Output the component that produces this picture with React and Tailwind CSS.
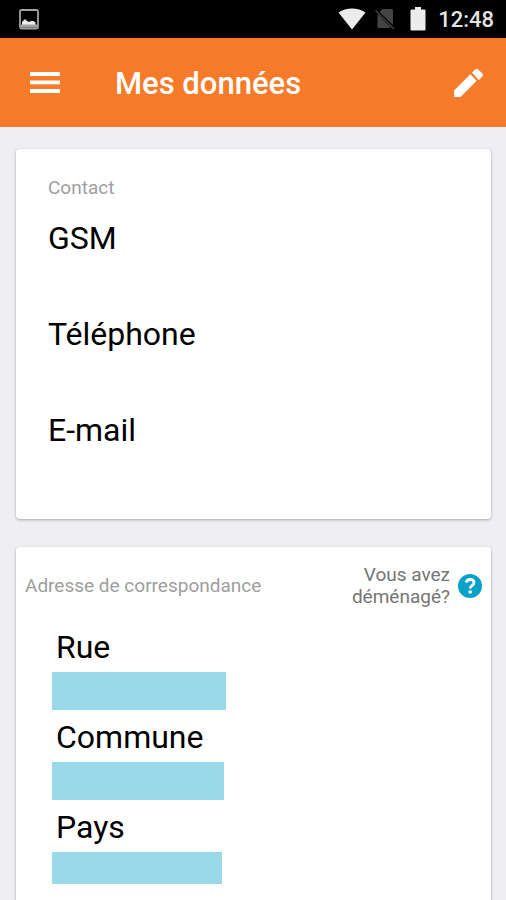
import React from 'react';

const contactFields = ['GSM', 'Téléphone', 'E-mail'];

const addressFields = [
  { label: 'Rue', bar: 'w-[174px] h-[38px]' },
  { label: 'Commune', bar: 'w-[172px] h-[38px]' },
  { label: 'Pays', bar: 'w-[170px] h-8' },
];

const MenuIcon = () => (
  <svg viewBox="0 0 40 40" className="w-10 h-10" fill="currentColor">
    <rect x="5" y="9" width="30" height="4" />
    <rect x="5" y="17.500" width="30" height="3.800" />
    <rect x="5" y="26" width="30" height="4" />
  </svg>
);

const PencilIcon = () => (
  <svg viewBox="0 0 40 40" className="w-10 h-10" fill="currentColor">
    <path d="M6 34v-6.500L22.300 11.300l6.400 6.400L12.500 34z" />
    <path d="M24 9.600l3.100-3.100q1.600-1.600 3.200 0l4 4q1.500 1.500 0 3l-3.600 3.600z" />
  </svg>
);

const HelpIcon = () => (
  <svg viewBox="0 0 24 24" className="w-6 h-6">
    <circle cx="12" cy="12" r="12" fill="#0aa2c8" />
    <path d="M8 8.500Q9 5.500 12.200 5.500Q16 5.500 16 8.600Q16 10.400 14 11.600Q12.300 12.600 12.300 14.500" fill="none" stroke="#fff" strokeWidth="2.800" />
    <circle cx="12.200" cy="18" r="1.800" fill="#fff" />
  </svg>
);

const StatusBar = () => (
  <div className="flex items-center h-[38px] pl-[18px] pr-3 bg-black">
    {/* Screenshot notification */}
    <svg viewBox="0 0 22 22" className="w-[22px] h-[22px]">
      <rect x="2" y="2" width="18" height="18.500" rx="1.500" fill="none" stroke="#a3a3a3" strokeWidth="1.800" />
      <path d="M4 17v-3l1.500-1.500L7 11l2 2 2 1 2-1h2.500l2 1.500V17z" fill="#ededed" />
      <path d="M3 16.500h16v3H3z" fill="#a3a3a3" />
    </svg>
    <div className="flex items-center ml-auto">
      {/* Wifi */}
      <svg viewBox="0 0 28 22" className="w-7 h-[22px]">
        <path d="M0.500 4.500C8 -1 20 -1 27.500 4.500L14 21.500z" fill="#ececec" />
      </svg>
      {/* No SIM */}
      <svg viewBox="0 0 22 22" className="w-[22px] h-[22px] ml-2">
        <path d="M8.500 1h9q1.500 0 1.500 1.500v14.500L5.500 4z" fill="#444" />
        <path d="M3.500 6L17 20H5q-1.500 0-1.500-1.500z" fill="#444" />
        <path d="M1.500 2.500L20 21" stroke="#444" strokeWidth="1.500" />
      </svg>
      {/* Battery */}
      <svg viewBox="0 0 16 24" className="w-4 h-6 ml-[14px]">
        <path d="M5 0h6v2.500h3.500q1 0 1 1v19q0 1-1 1h-13q-1 0-1-1v-19q0-1 1-1H5z" fill="#ececec" />
      </svg>
      <span className="ml-3 pt-0.5 text-[22px] leading-6 font-medium text-[#e4e4e4]">12:48</span>
    </div>
  </div>
);

const App = () => {
  return (
    <div className="min-h-screen bg-[#efeef3] font-['Roboto',sans-serif]">
      <StatusBar />

      <header className="flex items-center h-[89px] px-[18px] bg-[#f57a29] text-white">
        <button aria-label="Menu" className="ml-[7px]"><MenuIcon /></button>
        <h1 className="ml-[50px] pt-0.5 text-[31px] leading-10 font-medium">Mes données</h1>
        <button aria-label="Modifier" className="ml-auto"><PencilIcon /></button>
      </header>

      <main className="flex flex-col gap-7 pl-4 pr-[15px] pt-[22px]">
        <section className="px-8 pt-[27px] pb-[13px] bg-white rounded-sm shadow-[0_1px_3px_rgba(0,0,0,0.3)]">
          <h2 className="text-[19px] leading-6 text-[#9e9e9e]">Contact</h2>
          <ul className="mt-[18px]">
            {contactFields.map((field) => (
              <li key={field} className="h-24 text-[32px] leading-[40px] text-black">{field}</li>
            ))}
          </ul>
        </section>

        <section className="pt-[17px] pb-4 bg-white rounded-sm shadow-[0_1px_3px_rgba(0,0,0,0.3)]">
          <div className="flex items-center justify-between pl-[9px] pr-[9px]">
            <h2 className="text-[19px] leading-[22px] text-[#9e9e9e]">Adresse de correspondance</h2>
            <a href="#demenagement" className="flex items-center gap-2 text-right text-[19px] leading-[22px] text-[#757575]">
              <span>Vous avez<br />déménagé?</span>
              <HelpIcon />
            </a>
          </div>
          <dl className="mt-[19px] pl-9">
            {addressFields.map(({ label, bar }) => (
              <div key={label} className="h-[90px]">
                <dt className="pl-1 text-[32px] leading-[40px] text-black">{label}</dt>
                <dd className={`mt-[5px] bg-[#9ad9ea] ${bar}`}></dd>
              </div>
            ))}
          </dl>
        </section>
      </main>
    </div>
  );
};

export default App;
